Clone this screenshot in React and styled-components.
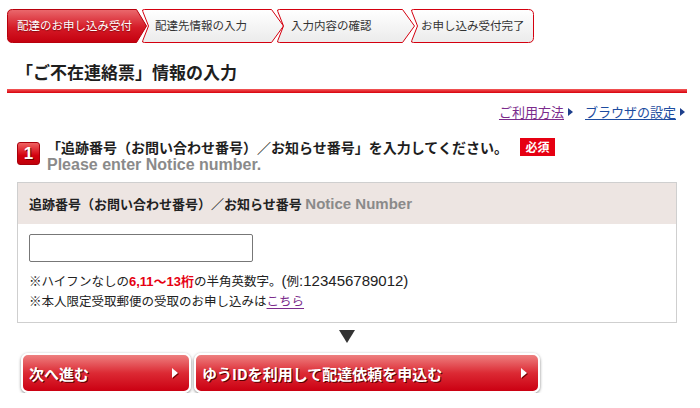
import React from "react";
import styled, { createGlobalStyle } from "styled-components";

const GlobalStyle = createGlobalStyle`
  body {
    margin: 0;
    background: #fff;
    color: #222;
    font-family: "Liberation Sans", "Noto Sans CJK JP", sans-serif;
  }
`;

const Page = styled.div`
  width: 680px;
  padding: 9px 13px 0 7px;
`;

const Steps = styled.ol`
  display: flex;
  margin: 0;
  padding: 0;
  list-style: none;
  height: 34px;
`;

const Step = styled.li`
  position: relative;
  width: ${(p) => p.$w}px;
  margin-left: ${(p) => p.$overlap || 0}px;
  height: 34px;
  flex: none;
`;

const StepShape = styled.svg`
  position: absolute;
  left: 0;
  top: 0;
`;

const StepLabel = styled.span`
  position: relative;
  display: block;
  padding-left: ${(p) => p.$pad}px;
  line-height: 33px;
  font-size: 11.5px;
  font-family: "Noto Sans CJK JP", sans-serif;
  color: ${(p) => (p.$active ? "#fff" : "#333")};
  text-shadow: ${(p) => (p.$active ? "0 1px 1px rgba(90,0,0,0.6)" : "none")};
  white-space: nowrap;
`;

const Title = styled.h1`
  margin: 17px 0 0;
  padding-left: 9px;
  font-size: 17px;
  line-height: 24px;
  font-weight: bold;
  font-family: "Noto Sans CJK JP", sans-serif;
  color: #1e1e1e;
`;

const Rule = styled.div`
  margin-top: 5px;
  height: 4px;
  background: linear-gradient(#f35a5a, #d8000c);
`;

const Links = styled.div`
  display: flex;
  justify-content: flex-end;
  gap: 12px;
  margin-top: 11px;
  padding-right: 2px;
  font-size: 13px;
  line-height: 16px;
  font-family: "Noto Sans CJK JP", sans-serif;
`;

const HelpLink = styled.a`
  display: flex;
  align-items: center;
  gap: 4px;
  color: ${(p) => (p.$visited ? "#7b2b8c" : "#1d4ca0")};
  text-decoration: underline;
  text-underline-offset: 2px;
  &::after {
    content: "";
    border-top: 4px solid transparent;
    border-bottom: 4px solid transparent;
    border-left: 5px solid #1d3f8c;
  }
`;

const Section = styled.section`
  margin: 18px 0 0 10px;
  width: 660px;
`;

const Heading = styled.div`
  display: flex;
  gap: 7px;
`;

const Num = styled.span`
  flex: none;
  margin-top: 4px;
  width: 23px;
  height: 23px;
  box-sizing: border-box;
  border: 1px solid #a8000c;
  border-radius: 3px;
  background: linear-gradient(#f06262, #d3000e 60%, #c0000a);
  color: #fff;
  font-size: 17px;
  font-weight: bold;
  line-height: 21px;
  text-align: center;
  text-shadow: 1px 1px 0 #6a0000;
`;

const HeadText = styled.div`
  display: flex;
  flex-direction: column;
`;

const Lead = styled.div`
  display: flex;
  align-items: center;
  font-size: 14px;
  line-height: 18px;
  font-weight: bold;
  font-family: "Noto Sans CJK JP", sans-serif;
  color: #1e1e1e;
`;

const Required = styled.span`
  margin-left: 12px;
  width: 35px;
  height: 18px;
  background: #e60012;
  color: #fff;
  font-size: 12px;
  line-height: 18px;
  text-align: center;
`;

const English = styled.div`
  font-size: 16px;
  line-height: 18px;
  font-weight: bold;
  color: #8a8a8a;
`;

const Box = styled.div`
  margin-top: 8px;
  border: 1px solid #cfcfcf;
`;

const BoxHead = styled.div`
  height: 41px;
  padding: 0 11px;
  background: #ede5e2;
  font-size: 13px;
  line-height: 41px;
  font-weight: bold;
  color: #222;
`;

const Muted = styled.span`
  color: #8a8a8a;
  font-size: 15px;
`;

const BoxBody = styled.div`
  padding: 10px 11px 10px;
`;

const Field = styled.input`
  display: block;
  box-sizing: border-box;
  width: 224px;
  height: 28px;
  border: 1px solid #777;
  border-radius: 2px;
  margin: 0 0 10px;
`;

const Note = styled.p`
  margin: 0;
  font-size: 12.5px;
  line-height: 20px;
  height: 20px;
  color: #222;
`;

const Latin = styled.span`
  font-size: 15px;
  line-height: 1;
`;

const Strong = styled.b`
  color: #e60012;
  font-size: 13px;
`;

const NoteLink = styled.a`
  color: #7b2b8c;
  text-decoration: underline;
  text-underline-offset: 2px;
`;

const Pointer = styled.div`
  display: flex;
  justify-content: center;
  margin-top: 7px;
  &::before {
    content: "";
    border-left: 8px solid transparent;
    border-right: 8px solid transparent;
    border-top: 13px solid #333;
  }
`;

const Buttons = styled.div`
  display: flex;
  gap: 3px;
  margin: 10px 0 0 14px;
`;

const Button = styled.button`
  display: flex;
  align-items: center;
  justify-content: space-between;
  width: ${(p) => p.$w}px;
  height: 40px;
  padding: 0 11px 0 6px;
  border: 2px solid #fff;
  border-radius: 7px;
  box-shadow: 0 1px 3px rgba(0, 0, 0, 0.5);
  background: linear-gradient(#ee8080, #dc2a34 50%, #cb0012);
  color: #fff;
  font-size: 15px;
  font-weight: bold;
  font-family: "Noto Sans CJK JP", sans-serif;
  text-shadow: 1px 1px 0 #5a0000;
  cursor: pointer;
  &::after {
    content: "";
    border-top: 5px solid transparent;
    border-bottom: 5px solid transparent;
    border-left: 6px solid #fff;
    filter: drop-shadow(1px 1px 0 #700);
  }
`;

const H = 33;

function stepPath(w, notch, arrow) {
  const m = H / 2 + 0.5;
  const b = H + 0.5;
  const top = notch ? `M3.5,0.5` : `M5.5,0.5`;
  const right = arrow
    ? `H${w - arrow - 0.5} L${w - 0.5},${m} L${w - arrow - 0.5},${b}`
    : `H${w - 5.5} Q${w - 0.5},0.5 ${w - 0.5},5.5 V${b - 5} Q${w - 0.5},${b} ${w - 5.5},${b}`;
  const left = notch
    ? `H3.5 Q0.5,${b} 1.8,${b - 2} L${notch + 0.5},${m} L1.8,2.5 Q0.5,0.5 3.5,0.5 Z`
    : `H5.5 Q0.5,${b} 0.5,${b - 5} V5.5 Q0.5,0.5 5.5,0.5 Z`;
  return `${top} ${right} ${left}`;
}

const steps = [
  { label: "配達のお申し込み受付", w: 140, overlap: 0, notch: 0, arrow: 10, pad: 10, active: true },
  { label: "配達先情報の入力", w: 143, overlap: -7, notch: 7, arrow: 12, pad: 14 },
  { label: "入力内容の確認", w: 139, overlap: -9, notch: 7, arrow: 12, pad: 15 },
  { label: "お申し込み受付完了", w: 124, overlap: -6, notch: 7, arrow: 0, pad: 11 },
];

export default function App() {
  return (
    <Page>
      <GlobalStyle />
      <Steps>
        {steps.map((s, i) => (
          <Step key={s.label} $w={s.w + 1} $overlap={s.overlap}>
            <StepShape width={s.w + 1} height={H + 1}>
              <defs>
                <linearGradient id={`stepFill${i}`} x1="0" y1="0" x2="0" y2="1">
                  {s.active ? (
                    <>
                      <stop offset="0" stopColor="#ea6a6e" />
                      <stop offset="0.55" stopColor="#d51b27" />
                      <stop offset="1" stopColor="#c4000f" />
                    </>
                  ) : (
                    <>
                      <stop offset="0" stopColor="#ffffff" />
                      <stop offset="1" stopColor="#ebebeb" />
                    </>
                  )}
                </linearGradient>
              </defs>
              <path
                d={stepPath(s.w, s.notch, s.arrow)}
                fill={`url(#stepFill${i})`}
                stroke={s.active ? "#b8000c" : "#d4000f"}
                strokeWidth="1"
              />
            </StepShape>
            <StepLabel $pad={s.pad} $active={s.active}>{s.label}</StepLabel>
          </Step>
        ))}
      </Steps>

      <Title>「ご不在連絡票」情報の入力</Title>
      <Rule />

      <Links>
        <HelpLink href="#" $visited>ご利用方法</HelpLink>
        <HelpLink href="#">ブラウザの設定</HelpLink>
      </Links>

      <Section>
        <Heading>
          <Num>1</Num>
          <HeadText>
            <Lead>
              「追跡番号（お問い合わせ番号）／お知らせ番号」を入力してください。
              <Required>必須</Required>
            </Lead>
            <English>Please enter Notice number.</English>
          </HeadText>
        </Heading>

        <Box>
          <BoxHead>
            追跡番号（お問い合わせ番号）／お知らせ番号 <Muted>Notice Number</Muted>
          </BoxHead>
          <BoxBody>
            <Field type="text" />
            <Note>
              ※ハイフンなしの<Strong>6,11〜13桁</Strong>の半角英数字。<Latin>(</Latin>例<Latin>:123456789012)</Latin>
            </Note>
            <Note>
              ※本人限定受取郵便の受取のお申し込みは<NoteLink href="#">こちら</NoteLink>
            </Note>
          </BoxBody>
        </Box>
        <Pointer />
      </Section>

      <Buttons>
        <Button $w={170}>次へ進む</Button>
        <Button $w={346}>ゆうIDを利用して配達依頼を申込む</Button>
      </Buttons>
    </Page>
  );
}
